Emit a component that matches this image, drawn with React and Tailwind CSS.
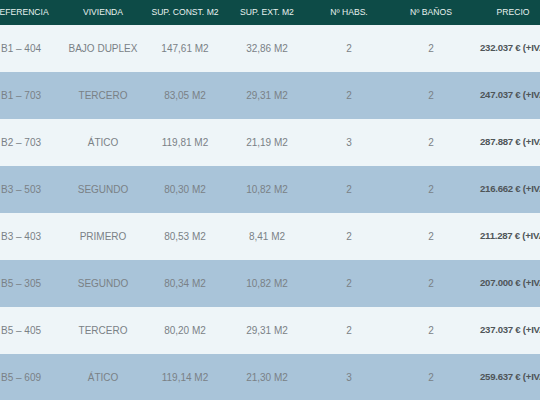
const HEADERS = ['Referencia', 'Vivienda', 'Sup. Const. M2', 'Sup. Ext. M2', 'Nº Habs.', 'Nº Baños', 'Precio'];

const ROWS = [
  ['B1 – 404', 'BAJO DUPLEX', '147,61 M2', '32,86 M2', '2', '2', '232.037 € (+IVA)'],
  ['B1 – 703', 'TERCERO', '83,05 M2', '29,31 M2', '2', '2', '247.037 € (+IVA)'],
  ['B2 – 703', 'ÁTICO', '119,81 M2', '21,19 M2', '3', '2', '287.887 € (+IVA)'],
  ['B3 – 503', 'SEGUNDO', '80,30 M2', '10,82 M2', '2', '2', '216.662 € (+IVA)'],
  ['B3 – 403', 'PRIMERO', '80,53 M2', '8,41 M2', '2', '2', '211.287 € (+IVA)'],
  ['B5 – 305', 'SEGUNDO', '80,34 M2', '10,82 M2', '2', '2', '207.000 € (+IVA)'],
  ['B5 – 405', 'TERCERO', '80,20 M2', '29,31 M2', '2', '2', '237.037 € (+IVA)'],
  ['B5 – 609', 'ÁTICO', '119,14 M2', '21,30 M2', '3', '2', '259.637 € (+IVA)'],
];

export default function App() {
  return (
    <div className="w-[540px] h-[400px] overflow-hidden bg-[#a9c4d9] font-['Liberation_Sans',Arial,sans-serif]">
      <table className="table-fixed border-collapse w-[574px] ml-[-20px]">
        <thead>
          <tr className="bg-[#0d4b47] h-[25px]">
            {HEADERS.map((h) => (
              <th key={h} className="w-[82px] p-0 text-center text-[8.6px] font-normal uppercase text-[#e8f1ef] whitespace-nowrap">
                {h}
              </th>
            ))}
          </tr>
        </thead>
        <tbody>
          {ROWS.map((row, i) => (
            <tr key={i} className={i % 2 === 0 ? 'bg-[#eef5f8] h-[47px]' : 'bg-[#a9c4d9] h-[47px]'}>
              {row.slice(0, 6).map((cell, j) => (
                <td key={j} className="p-0 text-center text-[10px] text-[#7a8186] whitespace-nowrap">
                  {cell}
                </td>
              ))}
              <td className="p-0 pl-[8px] text-left text-[9.6px] tracking-[-0.25px] font-bold text-[#4f5558] whitespace-nowrap">
                {row[6]}
              </td>
            </tr>
          ))}
        </tbody>
      </table>
    </div>
  );
}
